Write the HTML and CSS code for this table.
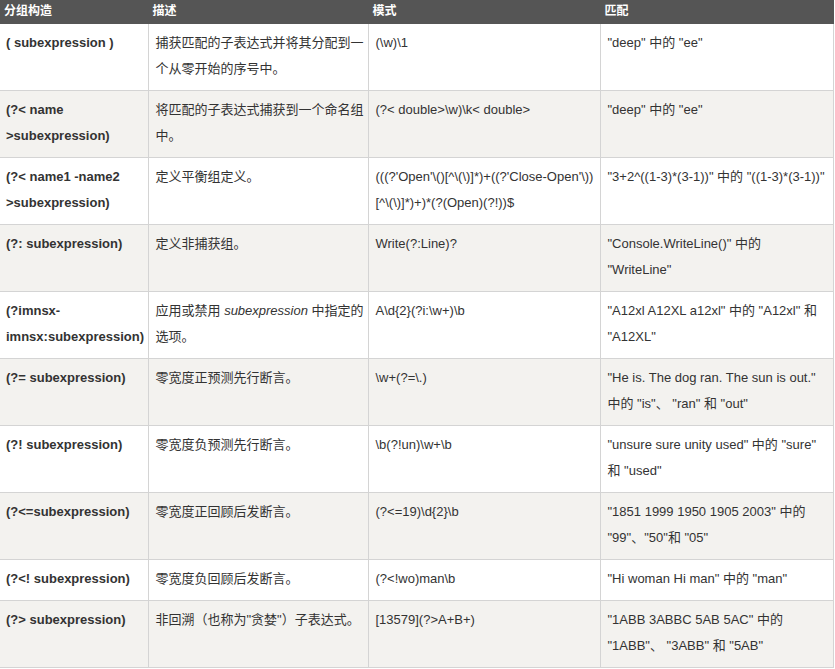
FILE: index.html
```html
<!DOCTYPE html>
<html lang="zh-CN">
<head>
<meta charset="utf-8">
<title>分组构造</title>
<link rel="stylesheet" href="styles.css">
</head>
<body>
<table class="reference">
  <colgroup>
    <col class="c1"><col class="c2"><col class="c3"><col class="c4">
  </colgroup>
  <thead>
    <tr><th>分组构造</th><th>描述</th><th>模式</th><th>匹配</th></tr>
  </thead>
  <tbody>
    <tr>
      <td><b>( subexpression )</b></td>
      <td>捕获匹配的子表达式并将其分配到一个从零开始的序号中。</td>
      <td>(\w)\1</td>
      <td>"deep" 中的 "ee"</td>
    </tr>
    <tr>
      <td><b>(?&lt; name &gt;subexpression)</b></td>
      <td>将匹配的子表达式捕获到一个命名组中。</td>
      <td>(?&lt; double&gt;\w)\k&lt; double&gt;</td>
      <td>"deep" 中的 "ee"</td>
    </tr>
    <tr>
      <td><b>(?&lt; name1 -name2 &gt;subexpression)</b></td>
      <td>定义平衡组定义。</td>
      <td>(((?'Open'\()[^\(\)]*)+((?'Close-Open'\))<wbr>[^\(\)]*)+)*(?(Open)(?!))$</td>
      <td>"3+2^((1-3)*(3-1))" 中的 "((1-3)*(3-1))"</td>
    </tr>
    <tr>
      <td><b>(?: subexpression)</b></td>
      <td>定义非捕获组。</td>
      <td>Write(?:Line)?</td>
      <td>"Console.WriteLine()" 中的<br>"WriteLine"</td>
    </tr>
    <tr>
      <td><b>(?imnsx-imnsx:subexpression)</b></td>
      <td>应用或禁用 <i>subexpression</i> 中指定的选项。</td>
      <td>A\d{2}(?i:\w+)\b</td>
      <td>"A12xl A12XL a12xl" 中的 "A12xl" 和 "A12XL"</td>
    </tr>
    <tr>
      <td><b>(?= subexpression)</b></td>
      <td>零宽度正预测先行断言。</td>
      <td>\w+(?=\.)</td>
      <td>"He is. The dog ran. The sun is out." 中的 "is"、 "ran" 和 "out"</td>
    </tr>
    <tr>
      <td><b>(?! subexpression)</b></td>
      <td>零宽度负预测先行断言。</td>
      <td>\b(?!un)\w+\b</td>
      <td>"unsure sure unity used" 中的 "sure" 和 "used"</td>
    </tr>
    <tr>
      <td><b>(?&lt;=subexpression)</b></td>
      <td>零宽度正回顾后发断言。</td>
      <td>(?&lt;=19)\d{2}\b</td>
      <td>"1851 1999 1950 1905 2003" 中的 "99"、"50"和 "05"</td>
    </tr>
    <tr>
      <td><b>(?&lt;! subexpression)</b></td>
      <td>零宽度负回顾后发断言。</td>
      <td>(?&lt;!wo)man\b</td>
      <td>"Hi woman Hi man" 中的 "man"</td>
    </tr>
    <tr>
      <td><b>(?&gt; subexpression)</b></td>
      <td>非回溯（也称为"贪婪"）子表达式。</td>
      <td>[13579](?&gt;A+B+)</td>
      <td>"1ABB 3ABBC 5AB 5AC" 中的 "1ABB"、 "3ABB" 和 "5AB"</td>
    </tr>
  </tbody>
</table>
</body>
</html>
```
FILE: styles.css
```css
html, body {
  margin: 0;
  padding: 0;
  background: #fff;
}

body {
  font-family: "Liberation Sans", "Noto Sans CJK SC", sans-serif;
  font-size: 13px;
  color: #333;
}

.reference {
  width: 833px;
  table-layout: fixed;
  border-collapse: collapse;
}

.c1 { width: 148px; }
.c2 { width: 220px; }
.c3 { width: 232px; }
.c4 { width: 233px; }

.reference th {
  background: #555;
  color: #fff;
  font-size: 12px;
  font-weight: bold;
  text-align: left;
  line-height: 17px;
  padding: 3px 4px;
  border: 1px solid #555;
  border-top: none;
  vertical-align: top;
}

.reference td {
  border: 1px solid #d4d4d4;
  padding: 6px 3px 8px 7px;
  line-height: 26px;
  vertical-align: top;
  word-wrap: break-word;
}

.reference td:first-child {
  padding-left: 6px;
  padding-right: 2px;
}

.reference td:first-child,
.reference th:first-child {
  border-left: none;
}

.reference tbody tr:nth-child(even) td {
  background: #f3f2ef;
}

.reference td b {
  font-weight: bold;
}
```
